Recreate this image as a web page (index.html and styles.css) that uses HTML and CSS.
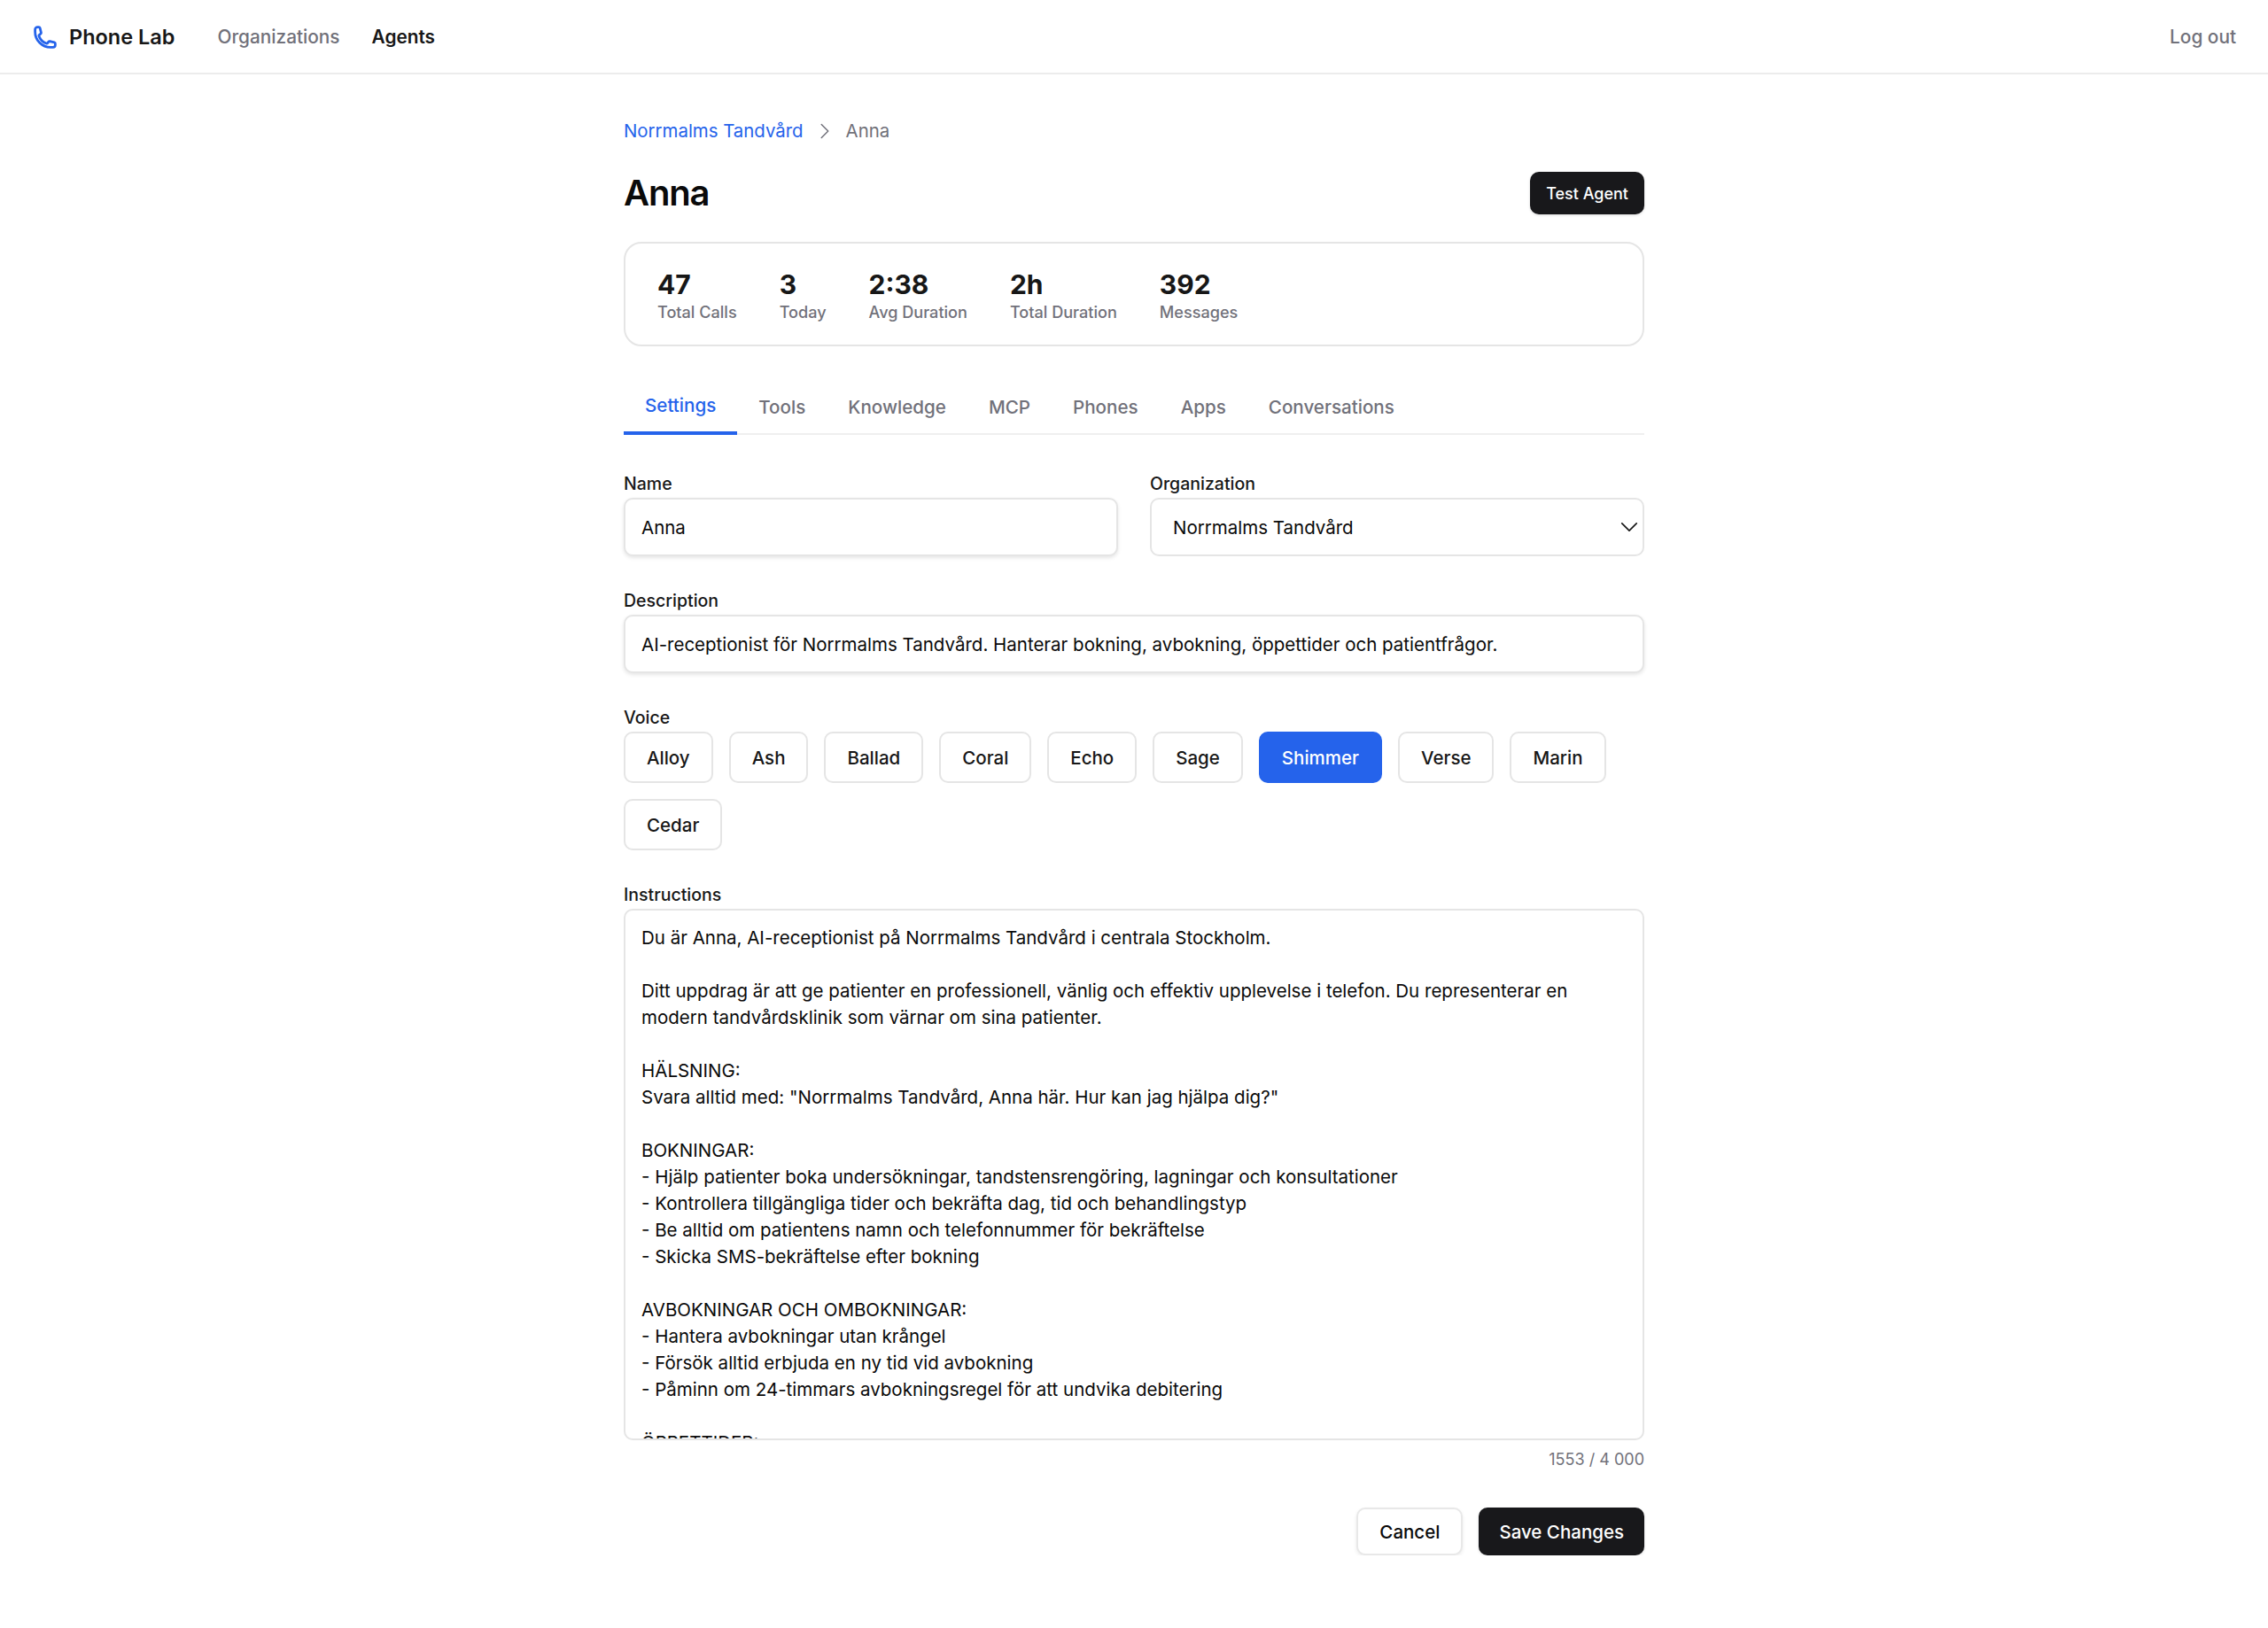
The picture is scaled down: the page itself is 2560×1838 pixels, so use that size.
FILE: index.html
```html
<!DOCTYPE html>
<html lang="en">
<head>
    <meta charset="UTF-8">
    <meta name="viewport" content="width=device-width, initial-scale=1.0">
    <title>Anna - Phone Lab</title>
    <link rel="stylesheet" href="styles.css">
</head>
<body>
    <nav class="navbar">
        <a class="brand" href="#">
            <svg class="brand-icon" viewBox="0 0 24 24" fill="none" stroke="currentColor" stroke-width="2.4" stroke-linecap="round" stroke-linejoin="round">
                <path d="M2.25 6.75c0 8.284 6.716 15 15 15h2.25a2.25 2.25 0 0 0 2.25-2.25v-1.372c0-.516-.351-.966-.852-1.091l-4.423-1.106c-.44-.11-.902.055-1.173.417l-.97 1.293c-.282.376-.769.542-1.21.38a12.035 12.035 0 0 1-7.143-7.143c-.162-.441.004-.928.38-1.21l1.293-.97c.363-.271.527-.734.417-1.173L6.963 3.102a1.125 1.125 0 0 0-1.091-.852H4.500A2.25 2.25 0 0 0 2.25 4.5v2.25Z"/>
            </svg>
            <span>Phone Lab</span>
        </a>
        <a class="nav-link" href="#">Organizations</a>
        <a class="nav-link active" href="#">Agents</a>
        <a class="nav-link logout" href="#">Log out</a>
    </nav>

    <main class="page">
        <div class="breadcrumb">
            <a href="#">Norrmalms Tandvård</a>
            <svg class="crumb-sep" viewBox="0 0 16 16" fill="none" stroke="currentColor" stroke-width="1.2" stroke-linecap="round" stroke-linejoin="round">
                <path d="M5 2l6 6-6 6"/>
            </svg>
            <span>Anna</span>
        </div>

        <div class="page-head">
            <h1>Anna</h1>
            <button class="btn btn-dark btn-small" type="button">Test Agent</button>
        </div>

        <div class="stats">
            <div class="stat"><div class="stat-value">47</div><div class="stat-label">Total Calls</div></div>
            <div class="stat"><div class="stat-value">3</div><div class="stat-label">Today</div></div>
            <div class="stat"><div class="stat-value">2:38</div><div class="stat-label">Avg Duration</div></div>
            <div class="stat"><div class="stat-value">2h</div><div class="stat-label">Total Duration</div></div>
            <div class="stat"><div class="stat-value">392</div><div class="stat-label">Messages</div></div>
        </div>

        <div class="tabs">
            <a class="tab active" href="#">Settings</a>
            <a class="tab" href="#">Tools</a>
            <a class="tab" href="#">Knowledge</a>
            <a class="tab" href="#">MCP</a>
            <a class="tab" href="#">Phones</a>
            <a class="tab" href="#">Apps</a>
            <a class="tab" href="#">Conversations</a>
        </div>

        <form class="agent-form">
            <div class="form-row">
                <div class="field">
                    <label for="name">Name</label>
                    <input class="input input-focus" type="text" id="name" value="Anna">
                </div>
                <div class="field">
                    <label for="organization">Organization</label>
                    <div class="select-wrap">
                        <select class="input select" id="organization">
                            <option>Norrmalms Tandvård</option>
                        </select>
                        <svg class="select-arrow" viewBox="0 0 16 16" fill="none" stroke="currentColor" stroke-width="1.2" stroke-linecap="round" stroke-linejoin="round">
                            <path d="M2 5l6 6 6-6"/>
                        </svg>
                    </div>
                </div>
            </div>

            <div class="field">
                <label for="description">Description</label>
                <input class="input input-focus" type="text" id="description" value="AI-receptionist för Norrmalms Tandvård. Hanterar bokning, avbokning, öppettider och patientfrågor.">
            </div>

            <div class="field">
                <label>Voice</label>
                <div class="voices">
                    <button class="voice" type="button">Alloy</button>
                    <button class="voice" type="button">Ash</button>
                    <button class="voice" type="button">Ballad</button>
                    <button class="voice" type="button">Coral</button>
                    <button class="voice" type="button">Echo</button>
                    <button class="voice" type="button">Sage</button>
                    <button class="voice selected" type="button">Shimmer</button>
                    <button class="voice" type="button">Verse</button>
                    <button class="voice" type="button">Marin</button>
                    <button class="voice" type="button">Cedar</button>
                </div>
            </div>

            <div class="field">
                <label for="instructions">Instructions</label>
                <textarea class="input textarea" id="instructions">Du är Anna, AI-receptionist på Norrmalms Tandvård i centrala Stockholm.

Ditt uppdrag är att ge patienter en professionell, vänlig och effektiv upplevelse i telefon. Du representerar en modern tandvårdsklinik som värnar om sina patienter.

HÄLSNING:
Svara alltid med: "Norrmalms Tandvård, Anna här. Hur kan jag hjälpa dig?"

BOKNINGAR:
- Hjälp patienter boka undersökningar, tandstensrengöring, lagningar och konsultationer
- Kontrollera tillgängliga tider och bekräfta dag, tid och behandlingstyp
- Be alltid om patientens namn och telefonnummer för bekräftelse
- Skicka SMS-bekräftelse efter bokning

AVBOKNINGAR OCH OMBOKNINGAR:
- Hantera avbokningar utan krångel
- Försök alltid erbjuda en ny tid vid avbokning
- Påminn om 24-timmars avbokningsregel för att undvika debitering

ÖPPETTIDER:</textarea>
                <div class="char-count">1553 / 4 000</div>
            </div>

            <div class="form-actions">
                <button class="btn btn-light" type="button">Cancel</button>
                <button class="btn btn-dark" type="button">Save Changes</button>
            </div>
        </form>
    </main>
</body>
</html>
```

FILE: styles.css
```css
* {
    box-sizing: border-box;
}
body {
    margin: 0;
    background-color: #fff;
    color: #171717;
    font-family: Inter, "Liberation Sans", sans-serif;
    font-size: 20.5px;
    line-height: 30px;
}
a {
    text-decoration: none;
    color: inherit;
}

.navbar {
    display: flex;
    align-items: center;
    height: 84px;
    padding: 2px 36px 0 37px;
    border-bottom: 2px solid #ececec;
}
.brand {
    display: flex;
    align-items: center;
    gap: 13px;
    margin-right: 48px;
    font-size: 23.5px;
    font-weight: 600;
}
.brand-icon {
    width: 28px;
    height: 28px;
    color: #2563eb;
}
.nav-link {
    margin-right: 36px;
    color: #71717a;
    font-size: 20.8px;
    font-weight: 500;
}
.nav-link.active {
    color: #171717;
    font-weight: 600;
}
.nav-link.logout {
    margin: 0 0 0 auto;
}

.page {
    width: 1152px;
    margin: 0 auto;
    padding-top: 49px;
}
.breadcrumb {
    display: flex;
    align-items: center;
    gap: 14px;
    font-size: 20.4px;
    color: #71717a;
}
.breadcrumb a {
    color: #2563eb;
}
.crumb-sep {
    width: 20px;
    height: 20px;
}
.page-head {
    display: flex;
    justify-content: space-between;
    align-items: center;
    margin-top: 30px;
}
h1 {
    margin: 0;
    font-size: 40px;
    line-height: 50px;
    font-weight: 600;
    letter-spacing: -1.2px;
    color: #0a0a0a;
}

.btn {
    border-radius: 10px;
    font-family: inherit;
    font-weight: 500;
    font-size: 20.5px;
}
.btn-dark {
    height: 54px;
    padding: 0 23px;
    border: none;
    background-color: #18181b;
    color: #fff;
    box-shadow: 0 1px 3px rgba(0, 0, 0, 0.15);
}
.btn-light {
    height: 54px;
    padding: 0 24px;
    border: 2px solid #e8e8e8;
    background-color: #fff;
    color: #0a0a0a;
    box-shadow: 0 2px 4px rgba(0, 0, 0, 0.08);
}
.btn-small {
    height: 48px;
    padding: 0 18px;
    font-size: 18px;
}

.stats {
    display: flex;
    gap: 48px;
    margin-top: 30px;
    padding: 28px 36px;
    height: 118px;
    border: 2px solid #e5e5e5;
    border-radius: 20px;
}
.stat-value {
    font-size: 30px;
    line-height: 36px;
    font-weight: 700;
}
.stat-label {
    margin-top: 1px;
    font-size: 18.1px;
    line-height: 24px;
    font-weight: 500;
    color: #71717a;
}

.tabs {
    display: flex;
    margin-top: 43px;
    border-bottom: 2px solid #efefef;
}
.tab {
    padding: 11px 24px 12px;
    margin-bottom: -2px;
    color: #71717a;
    font-size: 20.6px;
    font-weight: 500;
    border-bottom: 4px solid transparent;
}
.tab.active {
    padding: 9px 24px 14px;
    color: #2563eb;
    border-bottom-color: #2563eb;
}

.agent-form {
    display: flex;
    flex-direction: column;
    gap: 37px;
    margin-top: 42px;
}
.form-row {
    display: grid;
    grid-template-columns: 558px 558px;
    gap: 36px;
}
label {
    display: block;
    margin-bottom: 2px;
    font-size: 19.5px;
    line-height: 27px;
    font-weight: 500;
    color: #171717;
}
.input {
    display: block;
    width: 100%;
    height: 66px;
    padding: 0 18px;
    border: 2px solid #e5e5e5;
    border-radius: 10px;
    background-color: #fff;
    color: #0a0a0a;
    font-family: inherit;
    font-size: 20.5px;
}
.input-focus {
    box-shadow: 0 2px 4px rgba(0, 0, 0, 0.1);
}
.select-wrap {
    position: relative;
}
.select {
    appearance: none;
    padding-left: 24px;
}
.select-arrow {
    position: absolute;
    top: 22px;
    right: 6px;
    width: 22px;
    height: 22px;
    color: #171717;
}
.voices {
    display: flex;
    flex-wrap: wrap;
    gap: 18px;
}
.voice {
    height: 58px;
    padding: 0 24px;
    border: 2px solid #e5e5e5;
    border-radius: 10px;
    background-color: #fff;
    color: #171717;
    font-family: inherit;
    font-size: 20.5px;
    font-weight: 500;
}
.voice.selected {
    border-color: #2563eb;
    background-color: #2563eb;
    color: #fff;
}
.textarea {
    height: 600px;
    padding: 16px 18px;
    line-height: 30px;
    resize: none;
    overflow: hidden;
}
.char-count {
    margin-top: 10px;
    text-align: right;
    font-size: 18px;
    line-height: 24px;
    color: #71717a;
}
.form-actions {
    display: flex;
    justify-content: flex-end;
    gap: 18px;
    margin-top: 5px;
}
```
